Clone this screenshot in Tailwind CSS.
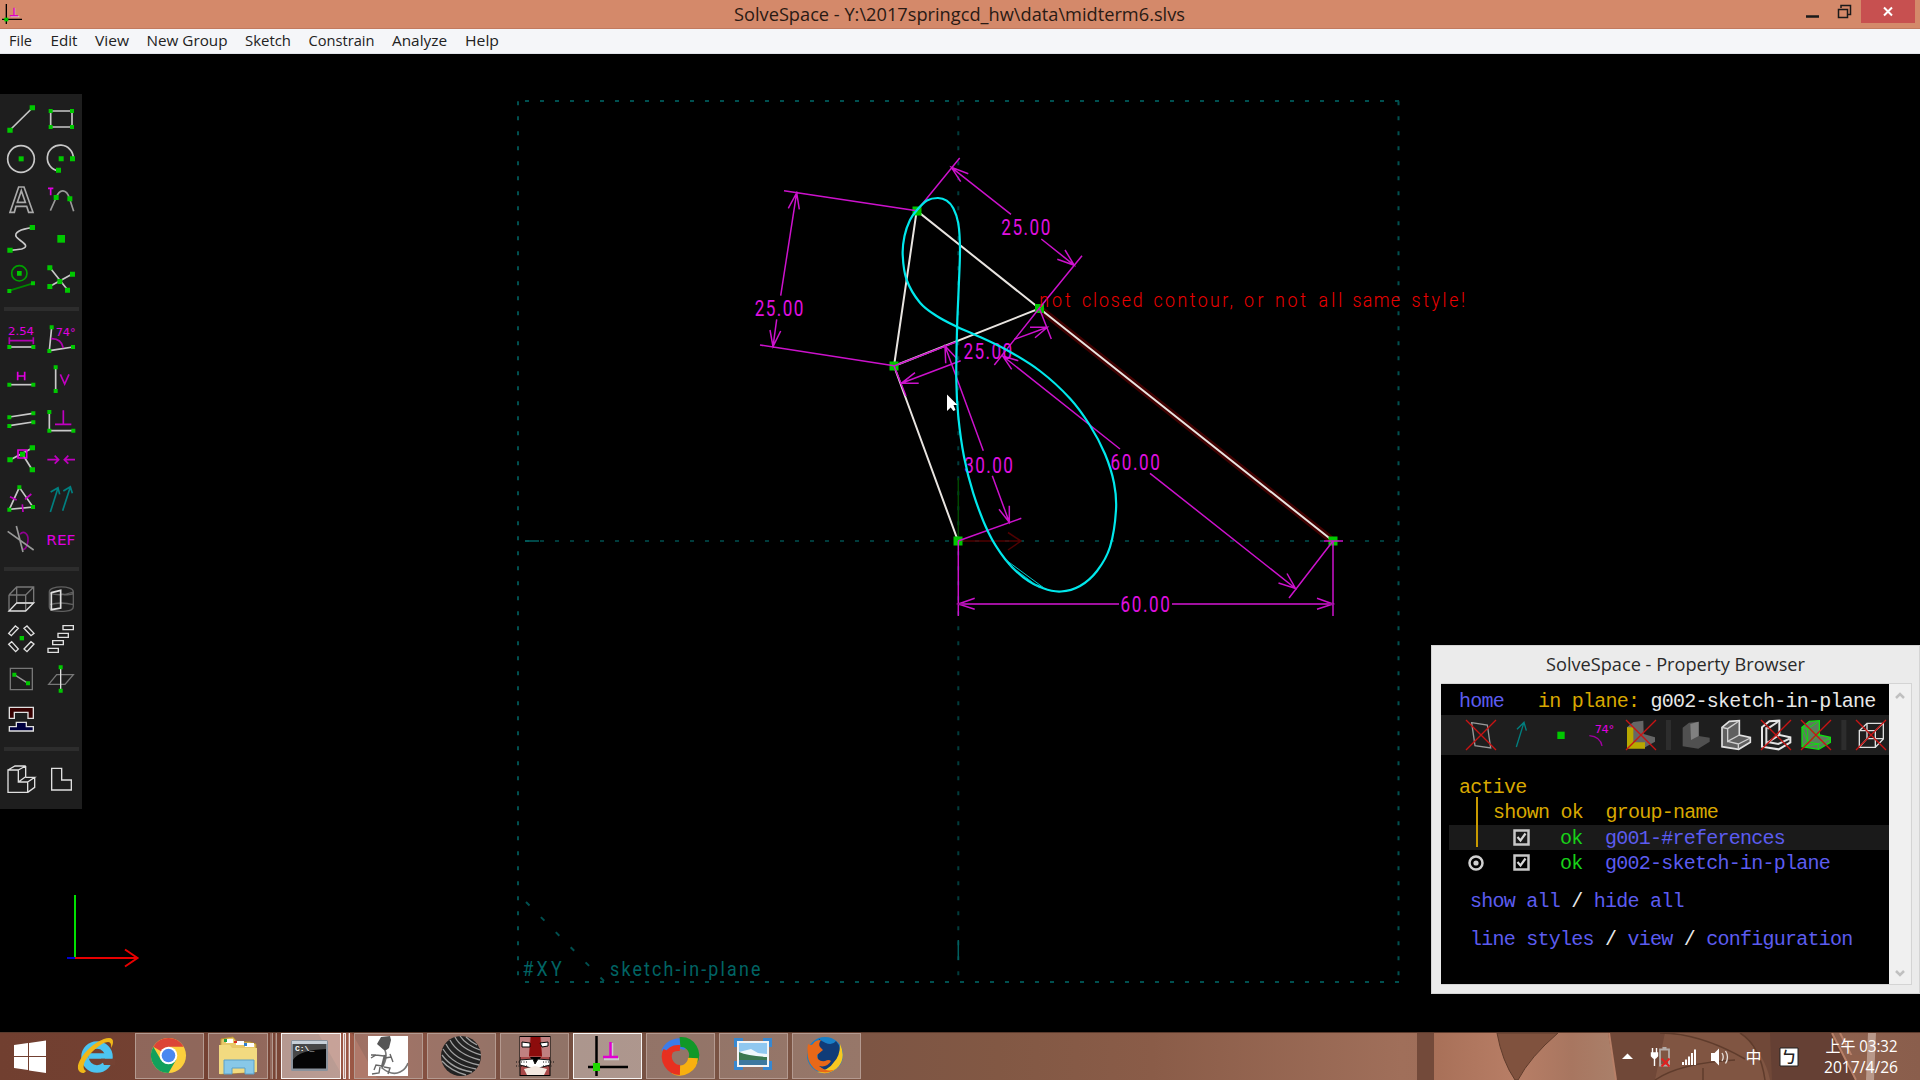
<!DOCTYPE html>
<html lang="en">
<head>
<meta charset="utf-8">
<title>SolveSpace</title>
<script src="https://cdn.jsdelivr.net/npm/@tailwindcss/browser@4"></script>
</head>
<body class="bg-black">
<div class="relative flex h-[1080px] w-[1920px] flex-col overflow-hidden bg-black">

  <!-- Title bar -->
  <header class="relative flex h-[29px] shrink-0 items-center justify-center border-b border-[#c27a5f] bg-[#d4896a]">
    <svg class="absolute left-0 top-0" width="26" height="28" viewBox="0 0 78 84"><path d="M19 12V72M6 58H66" stroke="#000" stroke-width="4"/><path d="M44 24V50M32 50H58" stroke="#d9b5c8" stroke-width="4"/><path d="M42 23V47M29 47H54" stroke="#e000c0" stroke-width="4"/><rect x="13" y="53" width="12" height="11" fill="#0c0"/></svg>
    <svg width="452" height="28"><text x="0" y="20.500" textLength="451" lengthAdjust="spacingAndGlyphs" font-family="'Open Sans','Noto Sans',sans-serif" font-size="18" fill="#2a1a14">SolveSpace - Y:\2017springcd_hw\data\midterm6.slvs</text></svg>
    <svg class="absolute right-0 top-0" width="120" height="28" viewBox="1800 0 120 28">
      <path d="M1806 16.500H1819" stroke="#1a1a1a" stroke-width="2.500"/>
      <path d="M1838.500 9.500H1847.500V17.500H1838.500ZM1841 8V5.500H1850.500V14.500H1848" fill="none" stroke="#1a1a1a" stroke-width="1.500"/>
      <rect x="1861" y="0" width="54" height="23" fill="#c75050"/>
      <path d="M1884 7.500L1892 15.500M1892 7.500L1884 15.500" stroke="#fff" stroke-width="2"/>
    </svg>
  </header>

  <!-- Menu bar -->
  <nav class="flex h-[25px] shrink-0 items-center border-b border-[#e2e4ea] bg-[#f5f6f9] pl-[9px] font-['Open_Sans','Noto_Sans',sans-serif] text-[15px] text-[#222]">
    <svg width="500" height="24" font-size="14.700" fill="#222">
      <text x="0" y="17" textLength="23" lengthAdjust="spacingAndGlyphs">File</text>
      <text x="41.500" y="17" textLength="27" lengthAdjust="spacingAndGlyphs">Edit</text>
      <text x="86" y="17" textLength="34" lengthAdjust="spacingAndGlyphs">View</text>
      <text x="137.500" y="17" textLength="81" lengthAdjust="spacingAndGlyphs">New Group</text>
      <text x="236" y="17" textLength="46" lengthAdjust="spacingAndGlyphs">Sketch</text>
      <text x="299.500" y="17" textLength="66" lengthAdjust="spacingAndGlyphs">Constrain</text>
      <text x="383" y="17" textLength="55" lengthAdjust="spacingAndGlyphs">Analyze</text>
      <text x="456" y="17" textLength="34" lengthAdjust="spacingAndGlyphs">Help</text>
    </svg>
  </nav>

  <!-- Drawing canvas -->
  <main class="relative h-[978px] shrink-0 bg-black">
    <svg class="absolute left-0 top-0" width="1920" height="978" viewBox="0 54 1920 978" fill="none" font-family="Roboto,'Liberation Sans',sans-serif">
      <!-- work plane -->
      <g stroke="#005050" stroke-width="2" stroke-dasharray="4 11">
        <path d="M525 101H1399M525 982H1399"/>
        <path d="M525 541H1399" stroke="#003c3c"/>
        <path d="M518 101.300V982M1398.500 101.300V982"/>
        <path d="M958.300 101.300V982" stroke="#003c3c"/>
        <path d="M526 902L604 981" stroke-dasharray="5 16.200"/>
      </g>
      <g fill="#006464" font-size="21">
        <text transform="translate(522.500 976) scale(.85 1)" textLength="46">#XY</text>
        <text transform="translate(610 976) scale(.85 1)" textLength="177">sketch-in-plane</text>
      </g>
      <path d="M525 541H539M958.300 940V960" stroke="#006060" stroke-width="1.500"/>
      <!-- origin axes -->
      <path d="M958 541H1021M1008 532.500L1021 541L1008 550" stroke="#500000" stroke-width="1.500"/>
      <path d="M958.300 541V478" stroke="#004800" stroke-width="1.500"/>
      <!-- links -->
      <path d="M1039.500 308.500L1333 541" stroke="#400000" stroke-width="7"/>
      <path d="M958 541L894 366L916.700 210.700L1039.500 308.500L894 366M1039.500 308.500L1333 541" stroke="#e8e4e0" stroke-width="2"/>
      <!-- joints -->
      <g fill="#00c800">
        <rect x="912.500" y="206.500" width="9" height="9"/><rect x="889.500" y="361.500" width="9" height="9"/>
        <rect x="1035" y="304" width="9" height="9"/><rect x="953.500" y="536.500" width="9" height="9"/><rect x="1328.500" y="536.500" width="9" height="9"/>
      </g>
      <!-- dimensions -->
      <g stroke="#cc12cc" stroke-width="1.500">
        <path d="M916.700 210.700L784 190.700M894 365.800L760 345M796.700 192.700L780.700 295.700M776.700 319.300L773 346.700M788.300 208.300L796.700 192.700L799.300 209.300M770 330L773 346.700L780.700 331"/>
        <path d="M916.700 210.700L959.700 158M1039.300 308.300L1082 255.700M951.300 167.300L1011 214.300M1041.300 239L1074.300 265.300M968.300 173.700L951.300 167.300L960.700 181.700M1057.300 259.300L1074.300 265.300L1065 250"/>
        <path d="M894 366L906 396M1039.300 308.300L1051.300 339M901.300 383.300L960.700 360.700M1014.300 339.300L1047.300 327.300M915 372.700L901.300 383.300L918.700 383.300M1030 327.300L1047.300 327.300L1035 337.700"/>
        <path d="M1039.300 308.300L994.300 365M1333 541L1289 598M1002.700 356L1120 449M1150 473.300L1295.500 588.500M1018.300 360.700L1002.700 356L1011.700 369.300M1278.500 583L1295.500 588.500L1287 573.500"/>
        <path d="M894 366L956 342M958 541L1021.300 518.300M945 346L983.300 450.700M992.300 475.700L1009.300 522.300M945.700 363.300L945 346L957 358.700M999 509.300L1009.300 522.300L1009.300 505.700"/>
        <path d="M958.300 541V616M1333 541V616M974.700 598.300L958.300 604L974.700 609.300M1317 598.300L1333 604L1317 609.300M1324 541H1343"/>
        <path d="M958 604H1119M1172 604H1333" stroke="#a010a0" stroke-width="2"/>
      </g>
      <g fill="#e010e0" font-size="22.500">
        <text transform="translate(1001.300 235.300) scale(.76 1)" textLength="64.500">25.00</text>
        <text transform="translate(754.700 316) scale(.76 1)" textLength="64">25.00</text>
        <text transform="translate(963.500 359) scale(.76 1)" textLength="64">25.00</text>
        <text transform="translate(1110.500 469.700) scale(.76 1)" textLength="65">60.00</text>
        <text transform="translate(964.300 472.700) scale(.76 1)" textLength="64">30.00</text>
        <text transform="translate(1120.500 612.300) scale(.76 1)" textLength="65">60.00</text>
      </g>
      <g fill="#ec0000" font-size="21" font-weight="300">
        <text transform="translate(1039.300 307) scale(.85 1)" textLength="37">not</text>
        <text transform="translate(1082 307) scale(.85 1)" textLength="71.500">closed</text>
        <text transform="translate(1153.500 307) scale(.85 1)" textLength="93.500">contour,</text>
        <text transform="translate(1244 307) scale(.85 1)" textLength="23">or</text>
        <text transform="translate(1275 307) scale(.85 1)" textLength="36.500">not</text>
        <text transform="translate(1318.500 307) scale(.85 1)" textLength="28">all</text>
        <text transform="translate(1352.500 307) scale(.85 1)" textLength="56">same</text>
        <text transform="translate(1411.500 307) scale(.85 1)" textLength="63">style!</text>
      </g>
      <!-- traced coupler curve -->
      <path id="trace" stroke="#00e8ec" stroke-width="2.200"/>
      <path d="M1006 560L1044 588M1008 564L1040 588" stroke="#00c8cc" stroke-width="1"/>
      <!-- axis triad -->
      <path d="M75 895V958" stroke="#00e000" stroke-width="2"/>
      <path d="M75 958H137M125 949.500L137.500 958L125 966.500" stroke="#e80000" stroke-width="2"/>
      <path d="M67 958H75" stroke="#0000d0" stroke-width="2"/>
      <!-- pointer -->
      <path d="M947 394.500V411L950.700 407.500L953.400 411L955.500 410L953.500 405H957.500Z" fill="#fff"/>
    </svg>

    <!-- Tool palette -->
    <aside class="absolute left-0 top-[40px] flex h-[715px] w-[82px] flex-col bg-[#1e1e1e] pt-[5px]">
      <div class="ml-px grid w-20 grid-cols-2 fill-none stroke-[#c8c8c8] stroke-[5]">
        <svg class="size-10" viewBox="3 27 120 120"><path d="M30 120L97 54"/><path d="M22 113h16v15H22zM89 46h16v15H89z" fill="#00c800" stroke="none"/></svg>
        <svg class="size-10" viewBox="123 27 120 120"><path d="M152 63H216V111H152Z"/><path d="M146 57h12v12h-12zM210 57h12v12h-12zM146 105h12v12h-12zM210 105h12v12h-12z" fill="#00c800" stroke="none"/></svg>
        <svg class="size-10" viewBox="3 147 120 120"><circle cx="63" cy="207" r="40"/><path d="M56 199h15v15H56z" fill="#00c800" stroke="none"/></svg>
        <svg class="size-10" viewBox="123 147 120 120"><path d="M175 243A39 39 0 1 1 220 205"/><path d="M176 199h15v15h-15zM210 199h15v15h-15zM168 233h15v15h-15z" fill="#00c800" stroke="none"/></svg>
        <svg class="size-10" viewBox="3 267 120 120"><path d="M30 367L56 291H72L99 367H86L80 349H48L43 367ZM52 337H76L64 302Z" stroke="#aaa"/></svg>
        <svg class="size-10" viewBox="123 267 120 120"><path d="M151 362L168 324C178 295 200 295 209 327L221 364" stroke="#999"/><path d="M161 315h15v15h-15zM202 319h15v15h-15z" fill="#00c800" stroke="none"/><path d="M144 295H160M152 295V316" stroke="#e000e0"/></svg>
        <svg class="size-10" viewBox="3 387 120 120"><path d="M97 413C62 417 39 428 50 442C60 454 95 468 65 477Q50 480 30 481"/><path d="M22 473h16v15H22zM89 405h16v15H89z" fill="#00c800" stroke="none"/></svg>
        <svg class="size-10" viewBox="123 387 120 120"><path d="M172 435h23v23h-23z" fill="#00c800" stroke="none"/></svg>
        <svg class="size-10" viewBox="3 507 120 120"><circle cx="58" cy="550" r="23" stroke="#00a000"/><path d="M28 602L99 580" stroke="#008400"/><path d="M51 543h14v14H51zM22 597h12v12H22zM93 574h12v12H93z" fill="#00c800" stroke="none"/></svg>
        <svg class="size-10" viewBox="123 507 120 120"><path d="M150 533L203 600M150 589L217 552"/><path d="M142 526h15v15h-15zM210 545h15v15h-15zM142 582h15v15h-15zM195 593h15v15h-15zM172 567h15v15h-15z" fill="#00c800" stroke="none"/></svg>
      </div>
      <div class="mx-1 my-2 h-1 w-[75px] shrink-0 bg-[#2d2d2d]"></div>
      <div class="ml-px grid w-20 grid-cols-2 fill-none stroke-[#c8c8c8] stroke-[5]">
        <svg class="size-10" viewBox="3 687 120 120"><text x="24" y="735" textLength="78" lengthAdjust="spacingAndGlyphs" font-size="34" font-family="'DejaVu Sans',sans-serif" fill="#e000e0" stroke="none">2.54</text><path d="M28 742V763M100 742V763M28 752H100" stroke="#b000b0"/><path d="M28 771H100"/><path d="M22 765h12v12H22zM94 765h12v12H94z" fill="#00c800" stroke="none"/></svg>
        <svg class="size-10" viewBox="123 687 120 120"><path d="M155 712L148 782L219 771"/><path d="M153 746Q184 745 190 774" stroke="#b000b0"/><text x="167" y="738" textLength="60" lengthAdjust="spacingAndGlyphs" font-size="34" font-family="'DejaVu Sans',sans-serif" fill="#e000e0" stroke="none">74°</text><path d="M149 706h12v12h-12zM142 777h12v12h-12zM213 765h12v12h-12z" fill="#00c800" stroke="none"/></svg>
        <svg class="size-10" viewBox="3 807 120 120"><path d="M53 845V871M74 845V871M53 858H74" stroke="#e000e0"/><path d="M28 884H100"/><path d="M22 878h12v12H22zM94 878h12v12H94z" fill="#00c800" stroke="none"/></svg>
        <svg class="size-10" viewBox="123 807 120 120"><path d="M167 832V903"/><path d="M181 853L194 882L207 853" stroke="#c000c0"/><path d="M161 826h12v12h-12zM161 897h12v12h-12z" fill="#00c800" stroke="none"/></svg>
        <svg class="size-10" viewBox="3 927 120 120"><path d="M28 981L99 970M28 1007L99 996"/><path d="M22 976h12v12H22zM94 964h12v12H94zM22 1002h12v12H22zM94 991h12v12H94z" fill="#00c800" stroke="none"/></svg>
        <svg class="size-10" viewBox="123 927 120 120"><path d="M148 966V1022H220"/><path d="M190 961V1003M165 1003H214" stroke="#c000c0"/><path d="M142 960h12v12h-12zM142 1016h12v12h-12zM214 1016h12v12h-12z" fill="#00c800" stroke="none"/></svg>
        <svg class="size-10" viewBox="3 -3 120 120"><path d="M30 60L97 24M67 42L97 90"/><path d="M22 52h16v15H22zM89 16h16v15H89zM89 82h16v15H89zM60 35h15v15H60z" fill="#00c800" stroke="none"/><path d="M54 30H80V54H54Z" stroke="#e000e0"/></svg>
        <svg class="size-10" viewBox="123 -3 120 120"><path d="M142 59H176M164 47L176 59L164 71M225 59H193M205 47L193 59L205 71" stroke="#c000c0"/></svg>
        <svg class="size-10" viewBox="3 117 120 120"><path d="M58 142L28 208L99 201Z"/><path d="M30 170L50 180M75 178L94 162M67 193L69 216" stroke="#c000c0"/><path d="M52 136h12v12H52zM22 203h12v12H22zM93 195h12v12H93z" fill="#00c800" stroke="none"/></svg>
        <svg class="size-10" viewBox="123 117 120 120"><path d="M151 216L174 144M152 156L174 143L179 163M188 212L211 141M190 153L211 140L217 160" stroke="#008080"/></svg>
        <svg class="size-10" viewBox="3 237 120 120"><path d="M60 283C70 270 86 280 84 302C82 322 74 330 68 327" stroke="#900090"/><path d="M23 274L101 330M49 258L69 336" stroke="#999"/></svg>
        <svg class="size-10" viewBox="123 237 120 120"><text x="139" y="315" textLength="87" lengthAdjust="spacingAndGlyphs" font-size="43" font-family="'DejaVu Sans',sans-serif" fill="#e000e0" stroke="none">REF</text></svg>
      </div>
      <div class="mx-1 my-2 h-1 w-[75px] shrink-0 bg-[#2d2d2d]"></div>
      <div class="ml-px grid w-20 grid-cols-2 fill-none stroke-[#e0e0e0] stroke-[4]">
        <svg class="size-10" viewBox="3 417 120 120"><path d="M27 465H77V513M27 465V513M27 465L50 441H101V488M77 465L101 441M50 441V489M50 489H101" stroke="#777"/><path d="M27 513H77L101 489H50Z"/></svg>
        <svg class="size-10" viewBox="123 417 120 120"><path d="M148 455C148 436 220 436 220 455C220 466 200 466 184 462M148 455V500C148 508 152 510 158 512M220 455V500C220 516 180 516 158 512M148 494Q184 484 220 494M150 460Q184 470 220 456" stroke="#606060"/><path d="M154 458L182 451V504L154 509Z" stroke-width="5"/></svg>
        <svg class="size-10" viewBox="3 537 120 120"><path d="M26 580L46 558L55 565L34 587ZM72 565L81 558L102 580L93 587ZM26 613L35 605L55 627L47 635ZM72 627L93 605L102 612L81 635Z"/><path d="M59 588h13v13H59z" fill="#00c800" stroke="none"/></svg>
        <svg class="size-10" viewBox="123 537 120 120"><path d="M189 557H220V569H189ZM174 580H205V592H174ZM158 602H190V614H158ZM144 625H175V637H144Z"/></svg>
        <svg class="size-10" viewBox="3 657 120 120"><path d="M31 685H97V749H31Z" stroke="#777"/><path d="M43 704L84 730" stroke="#999"/><path d="M37 698h12v12H37zM78 724h12v12H78z" fill="#00c800" stroke="none"/></svg>
        <svg class="size-10" viewBox="123 657 120 120"><path d="M146 733L170 704H220L195 733Z" stroke="#777"/><path d="M182 682V752"/><path d="M176 676h12v12h-12zM176 746h12v12h-12z" fill="#00c800" stroke="none"/></svg>
        <svg class="size-10" viewBox="3 777 120 120"><path d="M28 802H100V835H84V817H43V835H28Z" fill="#380000"/><path d="M28 873V860H49V847H79V860H100V873Z" fill="#000040"/></svg>
        <span></span>
      </div>
      <div class="mx-1 my-2 h-1 w-[75px] shrink-0 bg-[#2d2d2d]"></div>
      <div class="ml-px grid w-20 grid-cols-2 fill-none stroke-[#e0e0e0] stroke-[4]">
        <svg class="size-10" viewBox="3 957 120 120"><path d="M24 990H55V1026H83V1057H24ZM24 990L45 978H77L55 990M77 978V1010L55 1026M77 1012H104L83 1026M104 1012V1042L83 1057"/></svg>
        <svg class="size-10" viewBox="123 957 120 120"><path d="M155 985H185V1020H214V1050H155Z"/></svg>
      </div>
    </aside>

    <!-- Property browser window -->
    <section class="absolute left-[1431px] top-[591px] flex h-[349px] w-[489px] flex-col border border-[#d4d4d4] bg-[#ebebeb]">
      <h2 class="flex h-[37px] shrink-0 items-center justify-center">
        <svg width="264" height="37"><text x="2" y="25" textLength="259" lengthAdjust="spacingAndGlyphs" font-family="'Open Sans','Noto Sans',sans-serif" font-size="18.500" fill="#2a2a2a">SolveSpace - Property Browser</text></svg>
      </h2>
      <div class="ml-[9px] mr-[7px] flex h-[302px] border border-l-0 border-[#d4d4d4]">
        <div class="h-[300px] w-[448px] shrink-0 overflow-hidden bg-black font-['Liberation_Mono',monospace] text-[20px] leading-[25px] tracking-[-0.75px] text-[#5c5cf0]">
          <div class="flex h-[31px] items-center pl-[18px] pt-[3px]"><span>home</span><span class="whitespace-pre pl-[34px] text-[#d8a800]">in plane: </span><span class="text-[#e8e8e8]">g002-sketch-in-plane</span></div>
          <svg class="block bg-[#1e1e1e]" width="448" height="40" viewBox="48 225 1344 120" fill="none" stroke-width="4">
            <path d="M140 248L187 255L197 324L150 317Z" stroke="#999"/>
            <path d="M274 321L296 250M276 268L297 247L304 272" stroke="#008080"/>
            <path d="M397 275h22v22h-22z" fill="#00c800"/>
            <path d="M493 287Q526 290 531 318" stroke="#a000a0"/>
            <text x="509" y="280" font-family="'DejaVu Sans',sans-serif" font-size="32" fill="#e000e0" textLength="58" lengthAdjust="spacingAndGlyphs">74°</text>
            <path d="M606 262L625 246L655 242L656 282L690 292V305L655 325L606 320Z" fill="#666"/><path d="M606 262H625V307H660V326H606Z" fill="#b8a800"/>
            <path d="M723 240h15v90h-15zM1249 240h15v90h-15z" fill="#2d2d2d"/>
            <path d="M773 263L792 248L821 245V288L854 293V305L820 326L773 319Z" fill="#505050"/><path d="M796 252L821 245V288L798 300Z" fill="#808080"/>
            <path d="M891 262L913 244L943 242V285L976 292V307L941 328L891 320Z" fill="#606060" stroke="#e0e0e0" stroke-width="5"/><path d="M891 262L908 266L938 246M908 266V304L943 285M908 304L940 312L976 294M940 312V326" stroke="#d0d0d0" stroke-width="4"/>
            <path d="M1011 262L1033 244L1063 242V285L1096 292V307L1061 328L1011 320Z" stroke="#e8e8e8" stroke-width="6"/><path d="M1028 266L1058 246M1024 262V310L1063 285M1028 306L1060 312L1094 296" stroke="#e0e0e0" stroke-width="6"/>
            <path d="M1131 262L1153 244L1183 242V285L1216 292V307L1181 328L1131 320Z" fill="#5c7c5c" stroke="#10e010"/><path d="M1131 262L1148 266L1178 246M1148 266V304L1183 285M1148 304L1180 312L1216 294M1180 312V326M1131 262L1148 304L1131 320L1180 312M1148 266L1183 285" stroke="#10e010" stroke-width="3"/>
            <path d="M1303 272H1351V322H1303ZM1303 272L1326 250H1375V297L1351 322M1351 272L1375 250M1326 250V296H1375M1326 296L1303 322" stroke="#e0e0e0" stroke-width="4"/>
            <path d="M123 240L213 330M213 240L123 330M603 240L693 330M693 240L603 330M1008 240L1098 330M1098 240L1008 330M1128 240L1218 330M1218 240L1128 330M1293 240L1383 330M1383 240L1293 330" stroke="#c81414"/>
          </svg>
          <div class="relative pt-5 text-[#d8a800]">
            <div class="pl-[18px]">active</div>
            <div class="whitespace-pre pl-[52px]">shown ok  group-name</div>
            <i class="absolute left-[35px] top-[42px] z-10 h-[50px] w-[1.500px] bg-[#c89a00]"></i>
          </div>
          <div class="ml-2 flex h-[25px] items-center bg-[#1a1a1a] pl-16">
            <svg class="mr-[30px] size-[17px] shrink-0" viewBox="0 0 17 17"><path d="M1.500 1.500H15.500V15.500H1.500Z" fill="none" stroke="#c8c8c8" stroke-width="2.500"/><path d="M4.500 8L7.500 11.500L12.500 4.500" fill="none" stroke="#d8d8d8" stroke-width="2.200"/></svg>
            <span class="whitespace-pre pt-0.5 text-[#18d018]">ok  </span><span class="pt-0.5">g001-#references</span>
          </div>
          <div class="flex h-[25px] items-center pl-[27px]">
            <svg class="mr-[29px] size-4 shrink-0" viewBox="0 0 16 16"><circle cx="8" cy="8" r="6.500" fill="none" stroke="#d0d0d0" stroke-width="2.500"/><circle cx="8" cy="8" r="2.600" fill="#d0d0d0"/></svg>
            <svg class="mr-[30px] size-[17px] shrink-0" viewBox="0 0 17 17"><path d="M1.500 1.500H15.500V15.500H1.500Z" fill="none" stroke="#c8c8c8" stroke-width="2.500"/><path d="M4.500 8L7.500 11.500L12.500 4.500" fill="none" stroke="#d8d8d8" stroke-width="2.200"/></svg>
            <span class="whitespace-pre pt-0.5 text-[#18d018]">ok  </span><span class="pt-0.5">g002-sketch-in-plane</span>
          </div>
          <div class="mt-[14px] pl-[29px]">show all <span class="text-[#e8e8e8]">/</span> hide all</div>
          <div class="mt-[13px] pl-[29px]">line styles <span class="text-[#e8e8e8]">/</span> view <span class="text-[#e8e8e8]">/</span> configuration</div>
        </div>
        <div class="flex grow flex-col items-center justify-between bg-[#f0f0f0] py-[7px]">
          <svg width="10" height="9" viewBox="0 0 10 9"><path d="M1 7L5 3L9 7" fill="none" stroke="#c0c0c0" stroke-width="2.500"/></svg>
          <svg width="10" height="9" viewBox="0 0 10 9"><path d="M1 3L5 7L9 3" fill="none" stroke="#c0c0c0" stroke-width="2.500"/></svg>
        </div>
      </div>
    </section>
  </main>

  <!-- Taskbar -->
  <footer class="relative flex h-12 shrink-0 items-stretch border-t border-[#5a3a2c] bg-[#7d5544]">
    <svg class="absolute left-0 top-0" width="1920" height="47" viewBox="0 0 1920 47" preserveAspectRatio="none">
      <defs>
        <linearGradient id="bar"><stop offset="0" stop-color="#713f30"/><stop offset=".13" stop-color="#754233"/><stop offset=".2" stop-color="#8a5040"/><stop offset=".28" stop-color="#755042"/><stop offset=".45" stop-color="#7d5544"/><stop offset=".52" stop-color="#825844"/><stop offset=".6" stop-color="#8a5c48"/><stop offset=".73" stop-color="#a06f5a"/><stop offset="1" stop-color="#8a5e4c"/></linearGradient>
        <linearGradient id="skin"><stop offset="0" stop-color="#a87058"/><stop offset=".45" stop-color="#b87e66"/><stop offset=".75" stop-color="#a87660"/><stop offset="1" stop-color="#aa806a"/></linearGradient>
      </defs>
      <rect width="1920" height="47" fill="url(#bar)"/>
      <path d="M318 0H352L378 47H345Z" fill="#a45c48" opacity=".7"/>
      <path d="M1434 0H1610L1617 47H1434Z" fill="url(#skin)"/>
      <path d="M1417 0H1434V47H1417Z" fill="#734a3a"/>
      <path d="M1497 0Q1502 28 1515 47H1518Q1530 24 1558 0Z" fill="#80523e" stroke="#5f3c2c"/>
      <path d="M1608 0H1830L1857 47H1616Z" fill="#704838"/>
      <path d="M1665 0H1740Q1765 20 1770 47H1655Z" fill="#805542"/>
      <path d="M1660 0Q1700 0 1745 26M1655 47Q1680 30 1735 27M1740 0Q1760 12 1765 47M1703 35V47" fill="none" stroke="#5f3c2c" stroke-width="1.500"/>
      <path d="M1609 0L1616 47" stroke="#b88068" stroke-width="2"/>
      <path d="M1770 0H1832L1856 47H1772Z" fill="#654034"/>
      <path d="M1832 0L1856 47M1840 0L1864 47" stroke="#b88068" stroke-width="2"/>
      <path d="M1846 22H1866V47H1858Z" fill="#8f604c"/>
      <path d="M1868 0H1876L1874 47H1866Z" fill="#b8988a"/>
    </svg>

    <div class="relative flex w-[135px] items-center">
      <svg class="ml-3.5 size-[33px]" viewBox="0 0 33 33" fill="#fff"><path d="M0 5L14 3V16H0ZM15 3L32 .500V16H15ZM0 17H14V30L0 28ZM15 17H32V33L15 30.500Z"/></svg>
      <svg class="-mt-1 ml-7 size-10" viewBox="0 0 40 40"><circle cx="22" cy="22" r="12" fill="none" stroke="#4cc4f0" stroke-width="7.500"/><path d="M14 21H37" stroke="#4cc4f0" stroke-width="5.500"/><path d="M26 23.800H42V30H29Z" fill="#754233"/><path d="M5 37C-4 30 18 4 34 3C40 3 38 10 36 13C37 6 33 6 27 9C13 18 4 32 11 36C9 39 7 38 5 37Z" fill="#f0b818"/></svg>
    </div>

    <div class="relative flex items-start gap-1 *:box-border *:flex *:h-[46px] *:items-center *:justify-center">
      <div class="w-[69px] border border-[#b49a90] bg-white/20">
        <svg class="-ml-0.5 -mt-0.5 size-[37px]" viewBox="0 0 38 38"><circle cx="19" cy="19" r="18" fill="#fccf3c"/><path d="M19 19L3.400 10A18 18 0 0 1 34.600 10H19Z" fill="#dc4437"/><path d="M3.400 10A18 18 0 0 0 19 37L27 23L19 19L11 23Z" fill="#12a05c"/><circle cx="19" cy="19" r="9" fill="#fff"/><circle cx="19" cy="19" r="7" fill="#4a88f0"/></svg>
      </div>
      <div class="w-[69px] gap-0.5">
        <div class="flex h-full w-[61px] items-center justify-center border border-[#b49a90] bg-white/20">
          <svg class="size-10" viewBox="0 0 40 40"><path d="M3 3L15 1L19 6H32L38 8V36L2 38Z" fill="#e8c868" stroke="#b89030"/><path d="M8 3h7v4H8zM18 5h8v4h-8zM27 7h9v4h-9z" fill="#fff"/><path d="M6 3h3v3H6z" fill="#20a040"/><path d="M16 5h3v2h-3z" fill="#e03020"/><path d="M26 7h3v3h-3z" fill="#3080d0"/><path d="M1 9H12L14 12H39V36L1 38Z" fill="#f2da80"/><path d="M6 24H36V38H27V32H14V38H6Z" fill="#88c8e8" stroke="#5aa0c8"/></svg>
        </div>
        <i class="h-full w-[3px] border-r border-[#b49a90] bg-white/20"></i><i class="h-full w-[2px] border-r border-[#b49a90] bg-white/20"></i>
      </div>
      <div class="w-[69px] gap-0.5">
        <div class="flex h-full w-[61px] items-center justify-center border border-white/90 bg-white/45">
          <svg class="-ml-1 -mt-0.5" width="37" height="31" viewBox="0 0 37 31"><rect width="37" height="31" rx="1.500" fill="#8a929c"/><path d="M1 1H36V4H1Z" fill="#c8d0d8"/><path d="M2 4.500H35V28.500H2Z" fill="#050505"/><path d="M2 4.500H35V9Q8 10 2 20Z" fill="#484848"/><text x="4" y="11" font-family="'Liberation Mono',monospace" font-size="8" font-weight="700" fill="#fff">C:\_</text></svg>
        </div>
        <i class="h-full w-[3px] border border-white/80 bg-white/30"></i><i class="h-full w-[2px] border-r border-white/80 bg-white/30"></i>
      </div>
      <div class="w-[69px] border border-[#b49a90] bg-white/20">
        <svg class="-ml-0.5 size-10" viewBox="0 0 40 40"><rect width="40" height="40" fill="#fff"/><path d="M13 1L22 0L23 4L21 12L17 15L9 8Z" fill="#555"/><path d="M17 14Q20 22 14 32Q24 40 32 36Q38 33 40 27" fill="none" stroke="#777" stroke-width="1.600"/><path d="M16 20L8 19L3 22M3 19L8 19M17 22L23 21M22 18L25 26M14 30L8 29L6 34M4 38L11 37L12 31M16 31L22 32L20 38" fill="none" stroke="#666" stroke-width="1.400"/><path d="M17 19L14 31" stroke="#666" stroke-width="2.500"/></svg>
      </div>
      <div class="w-[69px] border border-[#b49a90] bg-white/20">
        <svg class="-ml-0.5 size-10" viewBox="0 0 40 40"><circle cx="20" cy="20" r="20" fill="#222"/><g fill="none" stroke="#a0a0a0" stroke-width="1.300"><path d="M9 4Q16 18 39 24M5 8Q13 24 38 29M2 13Q12 29 35 33M1 19Q11 33 31 36M1 25Q10 35 25 39M14 1Q20 13 40 19M19 0Q25 9 39 14M25 1Q30 6 36 9"/></g></svg>
      </div>
      <div class="w-[69px] border border-[#b49a90] bg-white/20">
        <svg class="size-10" viewBox="0 0 40 40"><rect x="5" y=".500" width="30" height="39" fill="#a84848" stroke="#000"/><path d="M5 1H15L14 21H5ZM26 1H35V21H27Z" fill="#c08080"/><path d="M16 1H25L27 20H14Z" fill="#8c0c0c"/><path d="M7 6L15 7V11H7ZM25 7L33 6V10L27 11Z" fill="#fff" stroke="#000"/><path d="M15 21H26L22 27H19Z" fill="#000"/><path d="M5 24L18 23L20 28L23 23L35 24V29L20 33L5 29Z" fill="#fff" stroke="#111"/><path d="M9 33L20 30L32 33L29 39H12Z" fill="#f4e8e0"/><path d="M1 26H12M1 30H12M28 26H39M28 30H38" stroke="#111" stroke-dasharray="1 1.500"/></svg>
      </div>
      <div class="w-[69px] border border-white/90 bg-white/40">
        <svg class="size-10" viewBox="0 0 40 40"><path d="M8.500 0V40M0 31H40" stroke="#000" stroke-width="2.500"/><path d="M24 7V24M16 23H31" stroke="#ccc" stroke-width="2.500"/><path d="M22.500 6V22M15 21H30" stroke="#e000d0" stroke-width="2.500"/><rect x="5" y="27" width="7" height="8" fill="#20d800"/></svg>
      </div>
      <div class="w-[69px] border border-[#b49a90] bg-white/20">
        <svg class="-ml-0.5 size-10" viewBox="0 0 40 40" fill="none" stroke-width="10"><path d="M6 16A14 14 0 0 1 27 10" stroke="#3c7ce8"/><path d="M20 6A13 13 0 0 1 32 26" stroke="#109828"/><path d="M33 22A13 13 0 0 1 14 33" stroke="#f8b010"/><path d="M20 34A13.500 13.500 0 0 1 8 15" stroke="#e83020"/><path d="M7 19Q11 11 20 12" stroke="#e83020" stroke-width="6"/></svg>
      </div>
      <div class="w-[69px] border border-[#b49a90] bg-white/20">
        <svg class="-ml-0.5 -mt-1 h-8 w-[38px]" viewBox="0 0 38 32"><path d="M1 9V1H9M29 1H37V9M37 23V31H29M9 31H1V23" fill="none" stroke="#3888d0" stroke-width="4"/><path d="M3 3H35V29H3Z" fill="#f4f4f4"/><path d="M5 5H33V27H5Z" fill="#90c8f0"/><path d="M5 14L17 11L24 15L33 16V19H5Z" fill="#f0f8fc"/><path d="M5 14Q14 18 33 19V22H5Z" fill="#3c7850"/><path d="M5 22H33V27H5Z" fill="#3c78a0"/></svg>
      </div>
      <div class="w-[69px] border border-[#b49a90] bg-white/20">
        <svg class="-ml-1 size-10" viewBox="0 0 40 40"><circle cx="20" cy="19" r="18" fill="#1880c8"/><path d="M14 3Q26 12 31 5Q37 12 35 20Q34 32 24 36L12 30Z" fill="#103c78"/><path d="M35 8Q41 20 34 30Q26 40 12 36Q24 34 29 26Q35 20 35 8Z" fill="#f8c820"/><path d="M3 8Q6 10 8 8Q10 4 16 4Q13 8 15 11L18 14L12 19Q12 26 20 25Q24 23 26 25Q22 32 14 30Q24 38 32 32Q22 40 11 34Q0 26 3 8Z" fill="#e86818"/></svg>
      </div>
    </div>

    <svg class="absolute right-0 top-0" width="320" height="47" viewBox="1600 1033 320 47">
      <path d="M1622 1059L1627.500 1053.500L1633 1059Z" fill="#fff"/>
      <path d="M1652.500 1048V1053M1656.500 1048V1053M1651.500 1053H1657.500V1056L1655.500 1058H1653.500L1651.500 1056ZM1654.500 1058V1066" stroke="#fff" stroke-width="1.400" fill="#fff"/>
      <path d="M1660 1049.500H1669V1065.500H1660ZM1662.500 1048H1666.500" fill="none" stroke="#b4aca8" stroke-width="1.800"/>
      <path d="M1661.500 1058.500L1669.500 1066.500M1669.500 1058.500L1661.500 1066.500" stroke="#e02020" stroke-width="2"/>
      <path d="M1682 1062h2v3h-2zM1685 1059.500h2v5.500h-2zM1688 1056.500h2v8.500h-2zM1691 1053h2v12h-2zM1694 1049.500h2v15.500h-2z" fill="#fff"/>
      <path d="M1711 1053H1714.500L1719 1048.500V1065.500L1714.500 1061H1711Z" fill="#fff"/>
      <path d="M1722 1053Q1724.500 1057 1722 1061M1725.500 1051Q1729.500 1057 1725.500 1063.500" stroke="#e8e0dc" fill="none" stroke-width="1.300"/>
      <text x="1745.500" y="1063" font-family="'Noto Sans CJK TC',sans-serif" font-size="16" fill="#fff">中</text>
      <path d="M1780 1048H1798V1066H1780Z" fill="#fff" stroke="#222"/>
      <text x="1781" y="1063" font-family="'Noto Sans CJK TC',sans-serif" font-size="16" font-weight="500" fill="#222">ㄅ</text>
      <g font-family="'Open Sans','Noto Sans CJK TC',sans-serif" font-size="15.500" fill="#fff">
        <text x="1825.500" y="1052" textLength="72" lengthAdjust="spacingAndGlyphs">上午 03:32</text>
        <text x="1824" y="1073" textLength="74" lengthAdjust="spacingAndGlyphs">2017/4/26</text>
      </g>
    </svg>
  </footer>
</div>
<script>
  // Smooth closed curve through the traced coupler points
  const p = [[938,198],[927,200.500],[917,210],[910,220],[904.500,236],[902.700,255],[906.700,280],[920,302.700],[936.700,316],[956.700,326.700],[975,334.700],[1006.700,350],[1040,371],[1070,398.500],[1090,425.500],[1105,454],[1114,483],[1116,510],[1110,547],[1097,571],[1080,586],[1061,591.500],[1043.300,588.300],[1023.300,577.300],[1005,559],[988.300,532.300],[973.300,493.300],[964,456.700],[958.300,416.700],[956.300,380],[957,330],[958.600,290],[960,250],[958.300,223.300],[953.300,208.300],[946.700,200.700]];
  const n = p.length;
  let d = 'M' + p[0];
  for (let i = 0; i < n; i++) {
    const a = p[(i + n - 1) % n], b = p[i], c = p[(i + 1) % n], e = p[(i + 2) % n];
    d += `C${b[0] + (c[0] - a[0]) / 6} ${b[1] + (c[1] - a[1]) / 6} ${c[0] - (e[0] - b[0]) / 6} ${c[1] - (e[1] - b[1]) / 6} ${c[0]} ${c[1]}`;
  }
  document.getElementById('trace').setAttribute('d', d);
</script>
</body>
</html>
